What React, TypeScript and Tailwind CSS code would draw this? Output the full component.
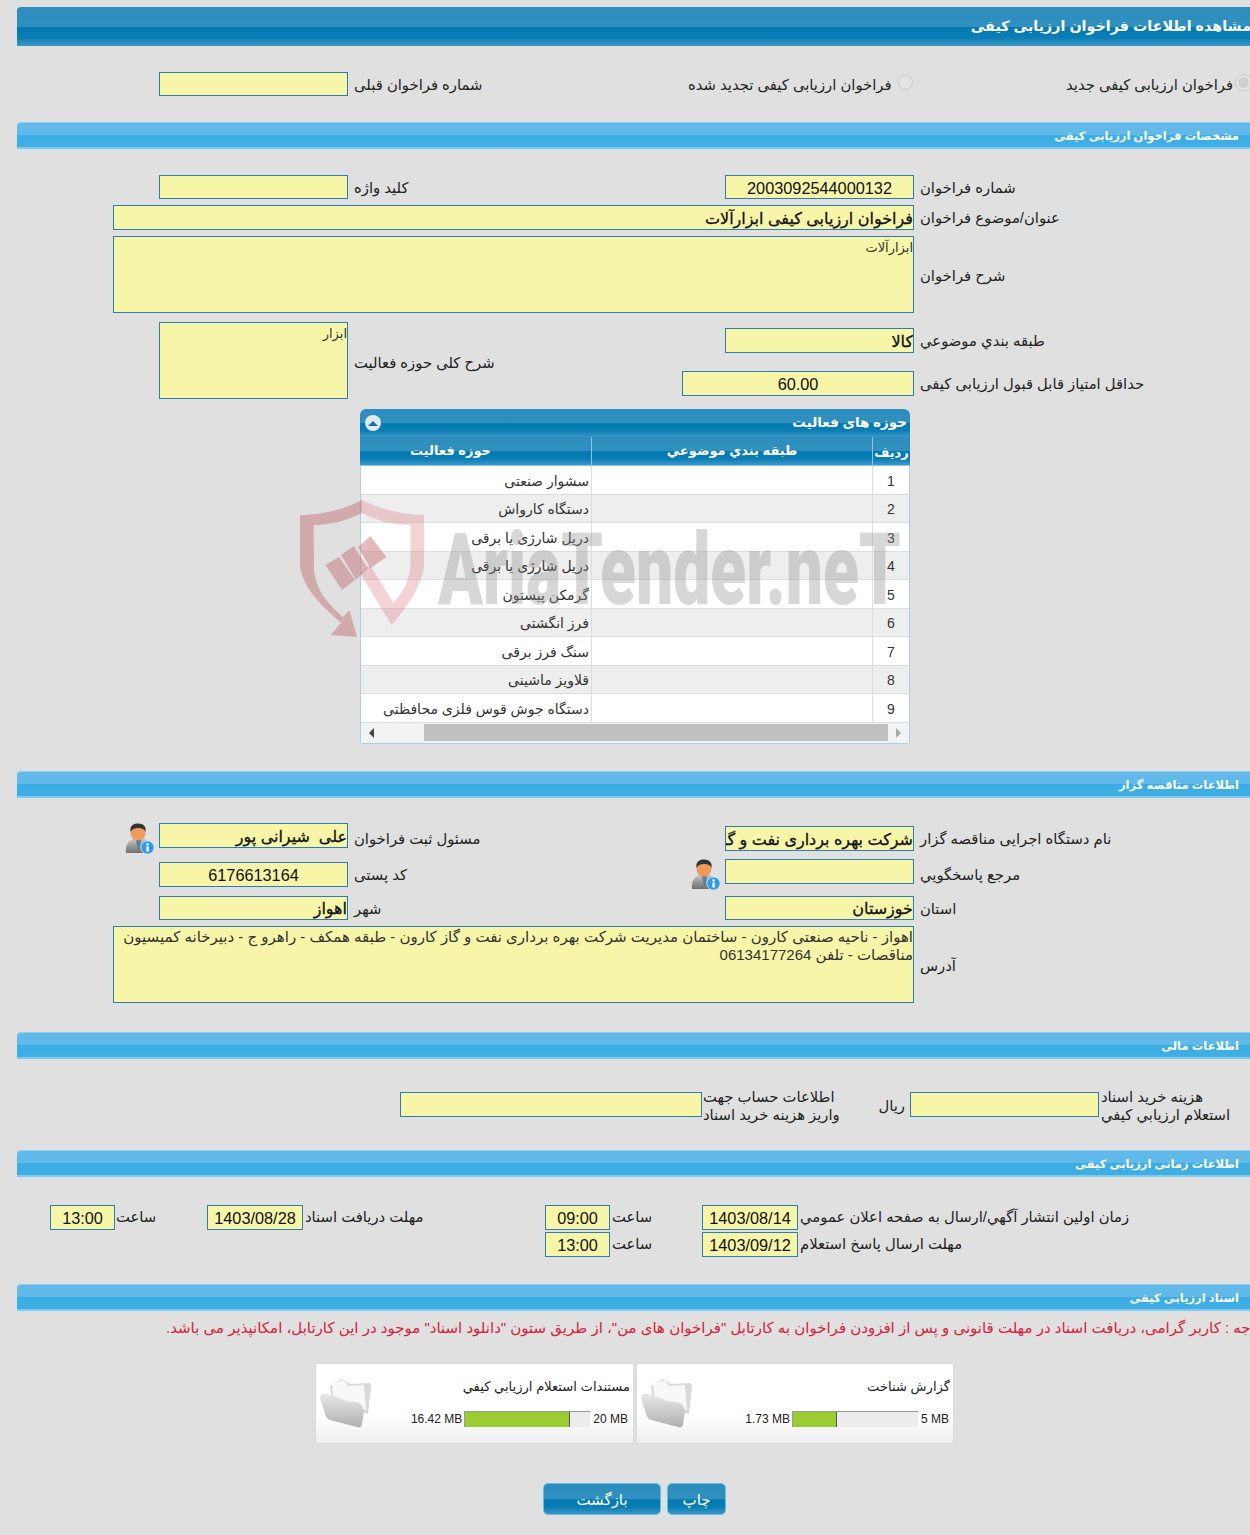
import React from "react";

const dark = "bg-[linear-gradient(#2c8dbe_0%,#3091c0_50%,#0379b1_52%,#0a7eb5_78%,#3f97c5_100%)]";
const FONT = "[font-family:'Liberation_Sans','DejaVu_Sans',sans-serif]";

function Box({ w, h, cls = "", children }: { w: string; h: string; cls?: string; children?: React.ReactNode }) {
  return (
    <div dir="rtl" className={`${w} ${h} shrink-0 overflow-hidden bg-[#f7f5a8] border border-[#2b7fb0] text-[#111] ${cls}`}>
      {children}
    </div>
  );
}

const numCls = "flex items-center justify-center pt-[2px] text-[16.3px] leading-none";
const strong = "flex items-center pt-[2px] text-[16px] whitespace-pre [-webkit-text-stroke:0.3px_#111]";

function Label({ children, cls = "" }: { children: React.ReactNode; cls?: string }) {
  return (
    <span dir="rtl" className={`text-[14.8px] leading-[18px] text-[#222] whitespace-nowrap ${cls}`}>
      {children}
    </span>
  );
}

function Bar({ title, cls = "" }: { title: string; cls?: string }) {
  return (
    <div
      dir="rtl"
      className={`ml-[17px] h-[27px] shrink-0 flex items-center pt-[4px] pr-[11px] rounded-tl-[4px] text-white text-[11.5px] font-bold border-t border-[#8ed2f3] border-b-2 border-b-[#7fcbf0] bg-[linear-gradient(#62baea_0%,#60b9e9_48%,#3badE3_52%,#3fafe4_100%)] ${cls}`}
    >
      {title}
    </div>
  );
}

function Left({ children }: { children: React.ReactNode }) {
  return <div className="w-[566px] shrink-0 flex items-start">{children}</div>;
}
function Right({ children }: { children: React.ReactNode }) {
  return <div className="flex-1 flex items-start">{children}</div>;
}
function InputCol({ children }: { children: React.ReactNode }) {
  return <div className="w-[348px] shrink-0 flex justify-end items-start">{children}</div>;
}

function Person({ cls = "" }: { cls?: string }) {
  return (
    <svg viewBox="0 0 30 32" className={`w-[30px] h-[32px] shrink-0 ${cls}`}>
      <defs>
        <linearGradient id="suit" x1="0" y1="0" x2="0" y2="1">
          <stop offset="0" stopColor="#c4c4c4" />
          <stop offset="1" stopColor="#6f6f6f" />
        </linearGradient>
      </defs>
      <path d="M1 30 C0 23 3 18 8 16 L19 16 C24 18 27 22 27 30 Z" fill="url(#suit)" />
      <path d="M11 17 L16 17 L14.5 27 L13 27 Z" fill="#5c7ea0" />
      <ellipse cx="13" cy="9.5" rx="7.5" ry="8" fill="#f09a5a" />
      <path d="M5.5 9 C4.5 2 9 0.5 13.5 0.5 C18.5 0.5 21.5 4 20.5 9 C19.5 6 17 5 13 5 C9.5 5 7 6 5.5 9 Z" fill="#333" />
      <circle cx="22.5" cy="24.5" r="6.6" fill="#2f9be6" stroke="#d5ecfb" strokeWidth="0.8" />
      <rect x="21.4" y="23.5" width="2.4" height="5" fill="#fff" />
      <rect x="21.4" y="20.3" width="2.4" height="2.2" fill="#fff" />
    </svg>
  );
}

function Folder() {
  return (
    <svg viewBox="0 0 56 56" className="w-[56px] h-[56px] shrink-0">
      <defs>
        <linearGradient id="fold" x1="0" y1="0" x2="0" y2="1">
          <stop offset="0" stopColor="#e8e8e8" />
          <stop offset="1" stopColor="#b0b0b0" />
        </linearGradient>
      </defs>
      <path d="M12 12 L24 5 L32 10 L50 9 C53 9 53 11 53 13 L50 40 L14 30 Z" fill="#d9d9d9" />
      <path d="M14 10 L26 6 L30 12 L46 11 L48 36 L16 32 Z" fill="#f8f8f8" />
      <path d="M2 24 C2 20 5 19 8 20 L22 24 C27 27 31 28 37 28 C42 28 46 33 46 37 L44 50 C44 53 41 54 39 53 L12 46 C9 45 8 43 7 40 Z" fill="url(#fold)" />
    </svg>
  );
}

function Card({ title, used, total, pct, w, end }: { title: string; used: string; total: string; pct: string; w: string; end: string }) {
  return (
    <div className={`relative h-[79px] shrink-0 ${w} flex bg-[linear-gradient(#ffffff_0%,#ffffff_65%,#eeeeee_100%)] shadow-[0_0_2px_#cfcfcf]`}>
      <div className="absolute left-[2px] top-[10px]"><Folder /></div>
      <div className="flex-1 flex flex-col items-end pr-[3px]">
        <span dir="rtl" className="text-[13.1px] leading-[18px] text-[#222] mt-[14px] h-[18px] whitespace-nowrap">{title}</span>
        <div className="flex items-center mt-[14px] text-[12px] text-[#222]">
          <span className="mr-[2px]">{used}</span>
          <div className="w-[126px] h-[16px] bg-[#ececec] border-t border-[#999] border-l border-l-[#999] flex">
            <div className={`${pct} h-full bg-[#9acd32] border-r border-[#555]`} />
          </div>
          <span className={`ml-[3px] ${end}`}>{total}</span>
        </div>
      </div>
    </div>
  );
}

const rows = [
  "سشوار صنعتی",
  "دستگاه کارواش",
  "دریل شارژی یا برقی",
  "دریل شارژی یا برقی",
  "گرمکن پیستون",
  "فرز انگشتی",
  "سنگ فرز برقی",
  "قلاویز ماشینی",
  "دستگاه جوش قوس فلزی محافظتی",
];

function Table() {
  return (
    <div className="ml-[360px] mt-[10px] w-[550px] h-[335px] shrink-0 flex flex-col overflow-hidden rounded-t-[6px] rounded-b-[3px] bg-white">
      <div className={`h-[28px] shrink-0 flex items-center justify-between pl-[5px] pr-[3px] ${dark}`}>
        <div className="w-[16px] h-[16px] rounded-full bg-[#dcebf7] flex items-center justify-center">
          <div className="w-0 h-0 border-x-[5px] border-x-transparent border-b-[5px] border-b-[#1c6fa6]" />
        </div>
        <span dir="rtl" className="text-white text-[13.5px] font-semibold">حوزه های فعالیت</span>
      </div>
      <div className={`h-[29px] shrink-0 grid grid-cols-[231px_282px_1fr] border-b border-[#7fcbf0] text-white text-[13px] font-semibold ${dark}`}>
        <div dir="rtl" className="flex items-center justify-center pr-[50px]">حوزه فعالیت</div>
        <div dir="rtl" className="flex items-center justify-center border-x border-[#8fc4e2]">طبقه بندي موضوعي</div>
        <div dir="rtl" className="flex items-center justify-center pt-[3px]">ردیف</div>
      </div>
      <div className="flex-1 flex flex-col border-x border-b border-[#a8d0ea]">
        {rows.map((r, i) => (
          <div key={i} className={`h-[28.5px] shrink-0 grid grid-cols-[230px_282px_1fr] border-b border-[#dddddd] text-[#333] ${i % 2 ? "bg-[#eeeeee]" : "bg-white"}`}>
            <div dir="rtl" className="flex items-center pr-[2px] pt-[3px] text-[14px] whitespace-nowrap">{r}</div>
            <div className="border-x border-[#dddddd]" />
            <div className="flex items-center justify-center pt-[3px] text-[14px]">{i + 1}</div>
          </div>
        ))}
        <div className="flex-1 bg-[#f3f3f3] flex items-center px-[8px]">
          <div className="w-0 h-0 border-y-[5px] border-y-transparent border-r-[5px] border-r-[#444]" />
          <div className="ml-[50px] w-[466px] h-[17px] bg-[#c0c0c0]" />
          <div className="ml-[8px] w-0 h-0 border-y-[5px] border-y-transparent border-l-[5px] border-l-[#aaa]" />
        </div>
      </div>
    </div>
  );
}

function Watermark() {
  return (
    <div className="absolute left-[298px] top-[498px] w-[620px] h-[142px] pointer-events-none z-10">
      <svg viewBox="0 0 130 142" className="absolute left-0 top-0 w-[130px] h-[142px]">
        <path d="M64 2 C45 12 22 17 2 17 L2 69 C6 92 24 108 43 125 L32.5 137 L59 139 L51.5 112 L45 119 C30 105 19 95 16 72 L15.7 27 C35 27 50 22 64 15 Z" fill="#c25f64" fillOpacity="0.42" />
        <path d="M64 2 C84 12 106 17 126 17 L126 70 C122 90 110 108 93.5 127 L62 75 L72 67 L95.6 105 C106 92 112 82 112.5 65 L112.5 27 C92 27 78 22 64 15 Z" fill="#d9777c" fillOpacity="0.32" />
        <path d="M60 49 L72.5 38 L88.5 59 L72.5 70 Z" fill="#c25f64" fillOpacity="0.42" />
        <path d="M43 57 L55.7 48 L70 70 L58 82 Z" fill="#c25f64" fillOpacity="0.42" />
        <path d="M27.5 67 L41 59 L57 82 L44 92 Z" fill="#c25f64" fillOpacity="0.42" />
      </svg>
      <span className="absolute left-[140px] top-[17px] origin-left scale-x-[0.66] text-[100px] leading-[110px] font-black text-[#8c8c8c]/35 whitespace-nowrap [font-family:'Roboto',sans-serif]">
        AriaTender.neT
      </span>
    </div>
  );
}

export default function App() {
  return (
    <div className={`relative w-[1250px] h-[1535px] overflow-hidden bg-[#e0e0e0] flex flex-col text-[13px] ${FONT}`}>
      <Watermark />

      <div dir="rtl" className={`ml-[17px] mt-[7px] h-[39px] shrink-0 flex items-center pt-[1px] rounded-tl-[4px] text-white text-[14.3px] font-bold whitespace-nowrap ${dark}`}>
        <span className="-mr-[1px]">مشاهده اطلاعات فراخوان ارزیابی کیفی</span>
      </div>

      <div className="mt-[26px] h-[25px] shrink-0 flex">
        <Left>
          <InputCol><Box w="w-[189px]" h="h-[24px]" /></InputCol>
          <Label cls="ml-[6px] mt-[4px]">شماره فراخوان قبلی</Label>
        </Left>
        <Right>
          <div className="ml-[122px] w-[225px] shrink-0 flex items-start justify-between">
            <Label cls="mt-[4px]">فراخوان ارزیابی کیفی تجدید شده</Label>
            <div className="mt-[3px] w-[15px] h-[15px] shrink-0 rounded-full bg-[#e4e4e4] border border-[#c8c8c8]" />
          </div>
          <div className="ml-[153px] flex items-start">
            <Label cls="mt-[4px]">فراخوان ارزیابی کیفی جدید</Label>
            <div className="ml-[3px] mt-[3px] w-[15px] h-[15px] shrink-0 rounded-full bg-[#cfcfcf] border-2 border-[#e6e6e6] outline outline-1 outline-[#c8c8c8]" />
          </div>
        </Right>
      </div>

      <Bar title="مشخصات فراخوان ارزیابی کیفی" cls="mt-[25px]" />

      <div className="mt-[26px] h-[24px] shrink-0 flex">
        <Left>
          <InputCol><Box w="w-[189px]" h="h-[24px]" /></InputCol>
          <Label cls="ml-[6px] mt-[4px]">کلید واژه</Label>
        </Left>
        <Right>
          <InputCol><Box w="w-[189px]" h="h-[24px]" cls={numCls}>2003092544000132</Box></InputCol>
          <Label cls="ml-[6px] mt-[4px]">شماره فراخوان</Label>
        </Right>
      </div>

      <div className="mt-[6px] h-[25px] shrink-0 flex items-start">
        <div className="w-[914px] shrink-0 flex justify-end">
          <Box w="w-[801px]" h="h-[25px]" cls={strong}>فراخوان ارزیابی کیفی ابزارآلات</Box>
        </div>
        <Label cls="ml-[6px] mt-[4px]">عنوان/موضوع فراخوان</Label>
      </div>

      <div className="mt-[6px] h-[77px] shrink-0 flex items-center">
        <div className="w-[914px] shrink-0 flex justify-end">
          <Box w="w-[801px]" h="h-[77px]" cls="text-[13px] text-[#333] pt-[1px]">ابزارآلات</Box>
        </div>
        <Label cls="ml-[6px] mt-[3px]">شرح فراخوان</Label>
      </div>

      <div className="mt-[9px] h-[77px] shrink-0 flex items-start">
        <Left>
          <InputCol><Box w="w-[189px]" h="h-[77px]" cls="text-[13px] text-[#333] pt-[1px]">ابزار</Box></InputCol>
          <Label cls="ml-[6px] mt-[32px]">شرح کلی حوزه فعالیت</Label>
        </Left>
        <Right>
          <div className="flex flex-col">
            <div className="flex items-start mt-[6px]">
              <InputCol><Box w="w-[189px]" h="h-[25px]" cls={strong}>کالا</Box></InputCol>
              <Label cls="ml-[6px] mt-[4px]">طبقه بندي موضوعي</Label>
            </div>
            <div className="flex items-start mt-[18px]">
              <InputCol><Box w="w-[232px]" h="h-[25px]" cls={numCls}>60.00</Box></InputCol>
              <Label cls="ml-[6px] mt-[4px]">حداقل امتیاز قابل قبول ارزیابی کیفی</Label>
            </div>
          </div>
        </Right>
      </div>

      <Table />

      <Bar title="اطلاعات مناقصه گزار" cls="mt-[27px]" />

      <div className="mt-[25px] h-[30px] shrink-0 flex items-start">
        <Left>
          <InputCol>
            <Person cls="mr-[4px]" />
            <Box w="w-[189px]" h="h-[25px]" cls={strong}>علی  شیرانی پور</Box>
          </InputCol>
          <Label cls="ml-[6px] mt-[7px]">مسئول ثبت فراخوان</Label>
        </Left>
        <Right>
          <InputCol><Box w="w-[189px]" h="h-[25px]" cls={`${strong} mt-[3px]`}>شرکت بهره برداری نفت و گاز کارون</Box></InputCol>
          <Label cls="ml-[6px] mt-[7px]">نام دستگاه اجرایی مناقصه گزار</Label>
        </Right>
      </div>

      <div className="mt-[6px] h-[31px] shrink-0 flex items-start">
        <Left>
          <InputCol><Box w="w-[189px]" h="h-[25px]" cls={`${numCls} mt-[3px]`}>6176613164</Box></InputCol>
          <Label cls="ml-[6px] mt-[7px]">کد پستی</Label>
        </Left>
        <Right>
          <InputCol>
            <Person cls="mr-[4px]" />
            <Box w="w-[189px]" h="h-[25px]" />
          </InputCol>
          <Label cls="ml-[6px] mt-[7px]">مرجع پاسخگویي</Label>
        </Right>
      </div>

      <div className="mt-[6px] h-[24px] shrink-0 flex items-start">
        <Left>
          <InputCol><Box w="w-[189px]" h="h-[24px]" cls={strong}>اهواز</Box></InputCol>
          <Label cls="ml-[6px] mt-[4px]">شهر</Label>
        </Left>
        <Right>
          <InputCol><Box w="w-[189px]" h="h-[24px]" cls={strong}>خوزستان</Box></InputCol>
          <Label cls="ml-[6px] mt-[4px]">استان</Label>
        </Right>
      </div>

      <div className="mt-[6px] h-[77px] shrink-0 flex items-center">
        <div className="w-[914px] shrink-0 flex justify-end">
          <Box w="w-[801px]" h="h-[77px]" cls="text-[15px] leading-[18px] text-[#333] pt-[1px]">
            اهواز - ناحیه صنعتی کارون - ساختمان مدیریت شرکت بهره برداری نفت و گاز کارون - طبقه همکف - راهرو ج - دبیرخانه کمیسیون مناقصات - تلفن 06134177264
          </Box>
        </div>
        <Label cls="ml-[6px] mt-[3px]">آدرس</Label>
      </div>

      <Bar title="اطلاعات مالی" cls="mt-[29px]" />

      <div className="mt-[33px] h-[25px] shrink-0 flex items-center">
        <div className="ml-[400px] flex items-center">
          <Box w="w-[302px]" h="h-[25px]" />
          <div className="w-[208px] shrink-0 flex items-center justify-between pr-[5px] pl-[1px]">
            <Label cls="text-left mt-[3px]">اطلاعات حساب جهت<br />واریز هزینه خرید اسناد</Label>
            <Label cls="mt-[3px]">ریال</Label>
          </div>
          <Box w="w-[189px]" h="h-[25px]" />
          <Label cls="ml-[2px] mt-[3px] text-left">هزینه خرید اسناد<br />استعلام ارزیابي کیفي</Label>
        </div>
      </div>

      <Bar title="اطلاعات زمانی ارزیابی کیفی" cls="mt-[33px]" />

      <div className="mt-[28px] h-[25px] shrink-0 flex items-center">
        <div className="ml-[50px]"><Box w="w-[65px]" h="h-[25px]" cls={numCls}>13:00</Box></div>
        <div className="w-[92px] shrink-0 pl-[1px] pt-[1px]"><Label>ساعت</Label></div>
        <Box w="w-[96px]" h="h-[25px]" cls={numCls}>1403/08/28</Box>
        <div className="w-[242px] shrink-0 pl-[2px] pt-[1px]"><Label>مهلت دریافت اسناد</Label></div>
        <Box w="w-[65px]" h="h-[25px]" cls={numCls}>09:00</Box>
        <div className="w-[92px] shrink-0 pl-[2px] pt-[1px]"><Label>ساعت</Label></div>
        <Box w="w-[96px]" h="h-[25px]" cls={numCls}>1403/08/14</Box>
        <div className="pl-[2px] pt-[1px]"><Label>زمان اولین انتشار آگهي/ارسال به صفحه اعلان عمومي</Label></div>
      </div>

      <div className="mt-[2px] h-[25px] shrink-0 flex items-center">
        <div className="ml-[545px]"><Box w="w-[65px]" h="h-[25px]" cls={numCls}>13:00</Box></div>
        <div className="w-[92px] shrink-0 pl-[2px] pt-[1px]"><Label>ساعت</Label></div>
        <Box w="w-[96px]" h="h-[25px]" cls={numCls}>1403/09/12</Box>
        <div className="pl-[2px] pt-[1px]"><Label>مهلت ارسال پاسخ استعلام</Label></div>
      </div>

      <Bar title="اسناد ارزیابی کیفی" cls="mt-[27px]" />

      <div className="mt-[7px] h-[20px] shrink-0 flex items-center">
        <span dir="rtl" className="ml-[166px] shrink-0 text-[15px] text-[#d8203a] whitespace-nowrap">
          توجه : کاربر گرامی، دریافت اسناد در مهلت قانونی و پس از افزودن فراخوان به کارتابل "فراخوان های من"، از طریق ستون "دانلود اسناد" موجود در این کارتابل، امکانپذیر می باشد.
        </span>
      </div>

      <div className="mt-[26px] ml-[316px] flex gap-[4px] shrink-0">
        <Card title="مستندات استعلام ارزیابي کیفي" used="16.42 MB" total="20 MB" pct="w-[84%]" w="w-[317px]" end="mr-[2px]" />
        <Card title="گزارش شناخت" used="1.73 MB" total="5 MB" pct="w-[35%]" w="w-[316px]" end="mr-[1px]" />
      </div>

      <div className="mt-[40px] ml-[543px] flex gap-[6px] shrink-0">
        <button dir="rtl" className={`w-[118px] h-[32px] pt-[2px] rounded-[5px] border border-[#5cc0ec] text-white text-[15px] ${dark}`}>بازگشت</button>
        <button dir="rtl" className={`w-[59px] h-[32px] pt-[2px] rounded-[5px] border border-[#5cc0ec] text-white text-[15px] ${dark}`}>چاپ</button>
      </div>
    </div>
  );
}
